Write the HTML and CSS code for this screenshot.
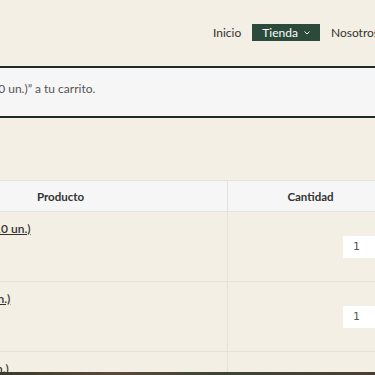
FILE: index.html
```html
<!DOCTYPE html>
<html lang="es">
  <head>
    <meta charset="utf-8">
    <title>Carrito</title>
    <link rel="stylesheet" href="styles.css">
  </head>
  <body>
    <div class="site">
      <header class="site-header">
        <nav class="main-nav">
          <a href="#" class="nav-item">Inicio</a>
          <a href="#" class="nav-item active">Tienda
            <svg class="chev" width="8" height="6" viewBox="0 0 8 6"><path d="M1.5 1.5 L4 4 L6.5 1.5" fill="none" stroke="#fff" stroke-width="1"/></svg>
          </a>
          <a href="#" class="nav-item">Nosotros</a>
          <a href="#" class="nav-item">Contacto</a>
        </nav>
      </header>

      <div class="notice">Se ha añadido “Yerba orgánica (10 un.)” a tu carrito.</div>

      <table class="cart">
        <colgroup>
          <col class="col-product">
          <col class="col-qty">
        </colgroup>
        <tr>
          <th>Producto</th>
          <th>Cantidad</th>
        </tr>
        <tr>
          <td class="product"><a href="#">Yerba orgánica (10 un.)</a></td>
          <td class="qty-cell"><input type="text" value="1" class="qty"></td>
        </tr>
        <tr>
          <td class="product"><a href="#">Té de menta (6 un.)</a></td>
          <td class="qty-cell"><input type="text" value="1" class="qty"></td>
        </tr>
        <tr>
          <td class="product"><a href="#">Té de frutos (6 un.)</a></td>
          <td class="qty-cell"><input type="text" value="1" class="qty"></td>
        </tr>
      </table>
    </div>
    <div class="photo-strip"></div>
  </body>
</html>
```

FILE: styles.css
```css
body {
  margin: 0;
  background: #f4efe4;
  font-family: Lato, "Open Sans", sans-serif;
  color: #333;
  overflow: hidden;
}
.site {
  margin-left: -180px;
  width: 700px;
}
.site-header {
  padding-top: 24px;
}
.main-nav {
  display: flex;
  margin-left: 382px;
}
.nav-item {
  display: flex;
  align-items: center;
  gap: 5px;
  padding: 0 11px;
  height: 17px;
  font-size: 12px;
  color: #333;
  text-decoration: none;
  white-space: nowrap;
}
.nav-item.active {
  background: #2b4a3b;
  color: #fff;
  padding: 0 9px 0 10px;
}
.notice {
  margin-top: 25px;
  border-top: 2px solid #1f2b25;
  border-bottom: 2px solid #1f2b25;
  background: #f6f6f6;
  padding: 11px 15px 17px 7px;
  line-height: 20px;
  font-size: 12px;
  color: #555;
  white-space: nowrap;
}
.cart {
  margin: 62px 0 0 73px;
  border-collapse: collapse;
  table-layout: fixed;
  width: 500px;
  font-size: 12px;
}
.col-product {
  width: 334px;
}
.col-qty {
  width: 166px;
}
.cart th {
  background: #f6f6f6;
  height: 30px;
  font-size: 11.5px;
  font-weight: bold;
  border: 1px solid #e6e2d9;
  padding: 0;
}
.cart td {
  height: 61px;
  border: 1px solid #e6e2d9;
  vertical-align: top;
  padding: 0;
}
.cart td.product {
  padding: 8px 12px 0 16px;
}
.product a {
  color: #333;
  font-weight: 600;
  line-height: 18px;
  white-space: nowrap;
}
.cart td.qty-cell {
  vertical-align: middle;
  text-align: right;
  padding: 0 12px 0 0;
  height: 68px;
}
.qty {
  width: 38px;
  height: 22px;
  box-sizing: border-box;
  border: 0;
  background: #fff;
  padding: 0 10px;
  font-family: "DejaVu Sans Mono", monospace;
  font-size: 11px;
  color: #555;
  vertical-align: middle;
}
.photo-strip {
  position: fixed;
  left: 0;
  right: 0;
  bottom: 0;
  height: 3px;
  background: linear-gradient(90deg, #3a3a2c, #5a4a3a 30%, #3d4436 60%, #4a3e34);
}
```
